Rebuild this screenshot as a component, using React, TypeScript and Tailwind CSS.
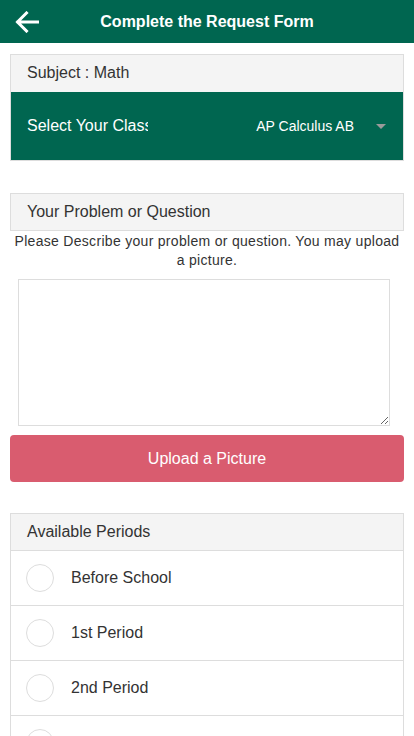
import { useState } from "react";

const PERIODS = ["Before School", "1st Period", "2nd Period", "3rd Period"];

export default function App() {
  const [picked, setPicked] = useState<string | null>(null);

  return (
    <div className="min-h-screen bg-white font-[family-name:'Liberation_Sans',Arial,sans-serif] text-[#333]">
      {/* Kopfzeile */}
      <header className="relative flex h-[43px] items-center justify-center bg-[#006650] text-white">
        <button type="button" aria-label="Back" className="absolute left-[15px] top-[11px]">
          <svg width="24" height="22" viewBox="0 0 24 22" fill="none">
            <path
              d="M22.5 11H3M11.5 2L2.5 11l9 9"
              stroke="white"
              strokeWidth="3"
              strokeLinecap="square"
            />
          </svg>
        </button>
        <h1 className="text-[16px] font-bold">Complete the Request Form</h1>
      </header>

      <main className="px-[10px]">
        {/* Fach + Klasse */}
        <section className="mt-[11px] border border-[#ddd]">
          <div className="flex h-[37px] items-center bg-[#f4f4f4] px-4 pb-[2px] text-[16px]">
            Subject : Math
          </div>
          <div className="flex h-[68px] items-center bg-[#006650] pl-4 pr-4 text-white">
            <span className="w-[121px] overflow-hidden whitespace-nowrap text-[16px]">
              Select Your Class
            </span>
            <span className="ml-auto text-[14px]">AP Calculus AB</span>
            <span className="ml-[22px] mr-[1px] h-0 w-0 border-x-[5px] border-t-[5px] border-x-transparent border-t-[#9a9a9a]" />
          </div>
        </section>

        {/* Problem */}
        <section className="mt-[32px]">
          <div className="flex h-[38px] items-center border border-[#ddd] bg-[#f4f4f4] px-4 pb-[1px] text-[16px]">
            Your Problem or Question
          </div>
          <p className="mt-[1px] px-1 text-center text-[14px] leading-[19px] tracking-[0.3px]">
            Please Describe your problem or question. You may upload a picture.
          </p>
          <textarea className="mx-2 mt-[9px] block h-[147px] w-[372px] border border-[#ddd] bg-white outline-none" />
          <button
            type="button"
            className="mt-[9px] flex h-[47px] w-full items-center justify-center rounded-[4px] bg-[#d95c6f] text-[16px] text-white"
          >
            Upload a Picture
          </button>
        </section>

        {/* Zeiten */}
        <section className="mt-[31px] border border-[#ddd]">
          <div className="flex h-[36px] items-center bg-[#f4f4f4] px-4 text-[16px]">
            Available Periods
          </div>
          {PERIODS.map((p) => (
            <label
              key={p}
              className="flex h-[55px] cursor-pointer items-center border-t border-[#ddd] bg-white pl-[15px] text-[16px]"
            >
              <input
                type="radio"
                name="period"
                checked={picked === p}
                onChange={() => setPicked(p)}
                className="sr-only"
              />
              <span
                className={`h-[28px] w-[28px] rounded-full border ${
                  picked === p ? "border-[#006650] bg-[#006650]" : "border-[#ddd]"
                }`}
              />
              <span className="ml-[17px]">{p}</span>
            </label>
          ))}
        </section>
      </main>
    </div>
  );
}
